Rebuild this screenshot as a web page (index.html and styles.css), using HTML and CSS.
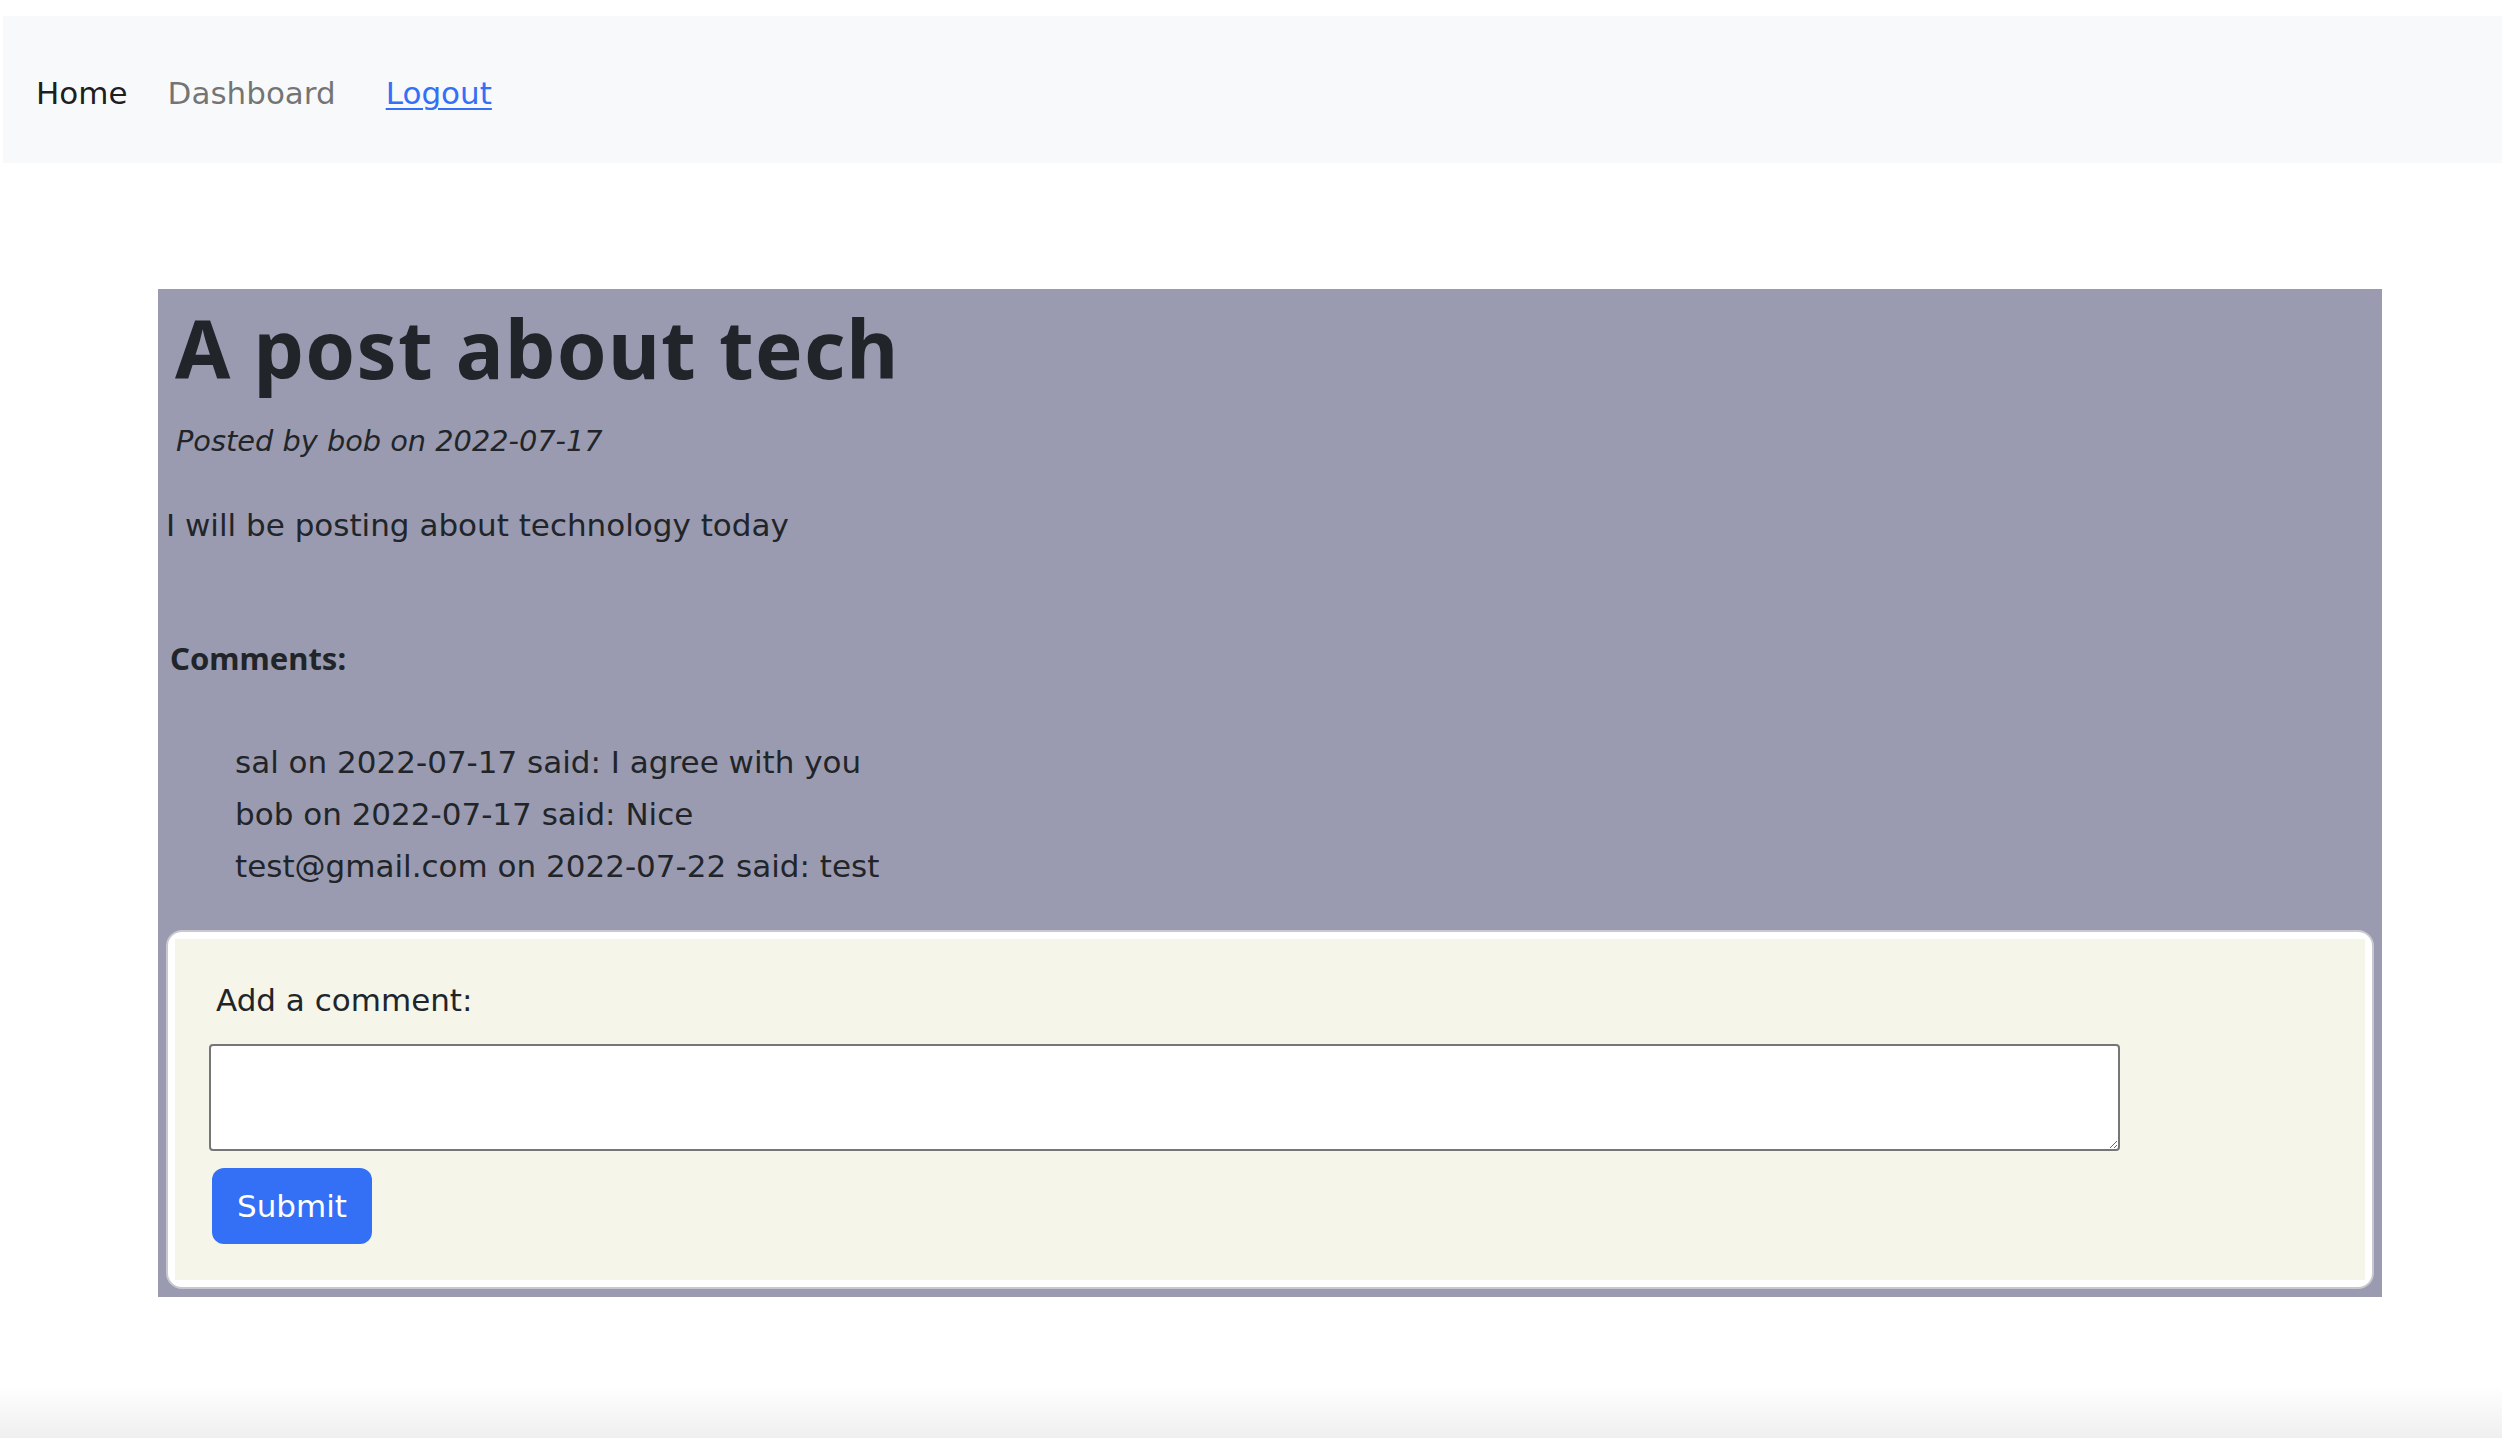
FILE: index.html
```html
<!DOCTYPE html>
<html lang="en">
<head>
<meta charset="utf-8">
<title>A post about tech</title>
<link rel="stylesheet" href="styles.css">
</head>
<body>
<nav class="navbar">
  <a class="nav-link active" href="#">Home</a>
  <a class="nav-link" href="#">Dashboard</a>
  <a class="logout" href="#">Logout</a>
</nav>
<main class="post-card">
  <h1 class="post-title">A post about tech</h1>
  <p class="post-meta">Posted by bob on 2022-07-17</p>
  <p class="post-body">I will be posting about technology today</p>
  <p class="comments-label">Comments:</p>
  <ul class="comment-list">
    <li>sal on 2022-07-17 said: I agree with you</li>
    <li>bob on 2022-07-17 said: Nice</li>
    <li>test@gmail.com on 2022-07-22 said: test</li>
  </ul>
  <div class="comment-box">
    <form class="comment-form">
      <label class="comment-label" for="comment">Add a comment:</label>
      <textarea id="comment" class="comment-input"></textarea>
      <button type="button" class="btn-submit">Submit</button>
    </form>
  </div>
</main>
</body>
</html>
```
FILE: styles.css
```css
html {
  height: 100%;
  background: linear-gradient(to bottom, #ffffff calc(100% - 52px), #efefef 100%);
}
body {
  margin: 0;
  padding-top: 16px;
  font-family: "DejaVu Sans", "Liberation Sans", sans-serif;
  font-size: 31px;
  line-height: 48px;
  color: #212529;
}
.navbar {
  margin: 0 0 0 3px;
  padding: 53px 0 46px 33px;
  background: #f8f9fa;
  display: flex;
  align-items: center;
}
.nav-link {
  color: rgba(0, 0, 0, 0.55);
  text-decoration: none;
  margin-right: 40px;
}
.nav-link.active {
  color: rgba(0, 0, 0, 0.9);
}
.nav-link + .nav-link {
  margin-right: 50px;
}
.logout {
  color: #3470f5;
  text-decoration: underline;
  text-underline-offset: 4px;
  text-decoration-thickness: 2px;
}
.post-card {
  margin: 126px 0 0 158px;
  width: 2224px;
  background: #9a9bb0;
  padding: 11px 0 8px 0;
  box-sizing: border-box;
  display: flex;
  flex-direction: column;
  align-items: flex-start;
}
.post-title {
  margin: 0 0 0 17px;
  font-family: "Noto Sans", "DejaVu Sans", sans-serif;
  font-weight: 700;
  font-size: 80px;
  line-height: 96px;
  letter-spacing: 1.2px;
}
.post-meta {
  margin: 24px 0 0 18px;
  font-style: italic;
  font-size: 28.8px;
  line-height: 43px;
}
.post-body {
  margin: 38px 0 0 8px;
}
.comments-label {
  margin: 85px 0 0 12px;
  font-family: "Noto Sans", "DejaVu Sans", sans-serif;
  font-weight: 700;
  font-size: 31px;
}
.comment-list {
  list-style: none;
  margin: 54px 0 0 77px;
  padding: 0;
  line-height: 52px;
}
.comment-box {
  align-self: stretch;
  margin: 38px 8px 0 8px;
  border: 2px solid #c8c8d0;
  border-radius: 16px;
  background: #ffffff;
  padding: 7px;
}
.comment-form {
  background: #f5f5e9;
  padding: 37px 34px 36px 34px;
  display: flex;
  flex-direction: column;
  align-items: flex-start;
}
.comment-label {
  margin-left: 7px;
}
.comment-input {
  display: block;
  margin-top: 20px;
  width: 1911px;
  height: 107px;
  box-sizing: border-box;
  border: 2px solid #767676;
  border-radius: 4px;
  background: #ffffff;
  font: inherit;
}
.btn-submit {
  margin: 17px 0 0 3px;
  width: 160px;
  height: 76px;
  border: 0;
  border-radius: 12px;
  background: #3470f5;
  color: #ffffff;
  font-family: "DejaVu Sans", sans-serif;
  font-size: 31px;
  line-height: 48px;
  padding: 0;
}
```
